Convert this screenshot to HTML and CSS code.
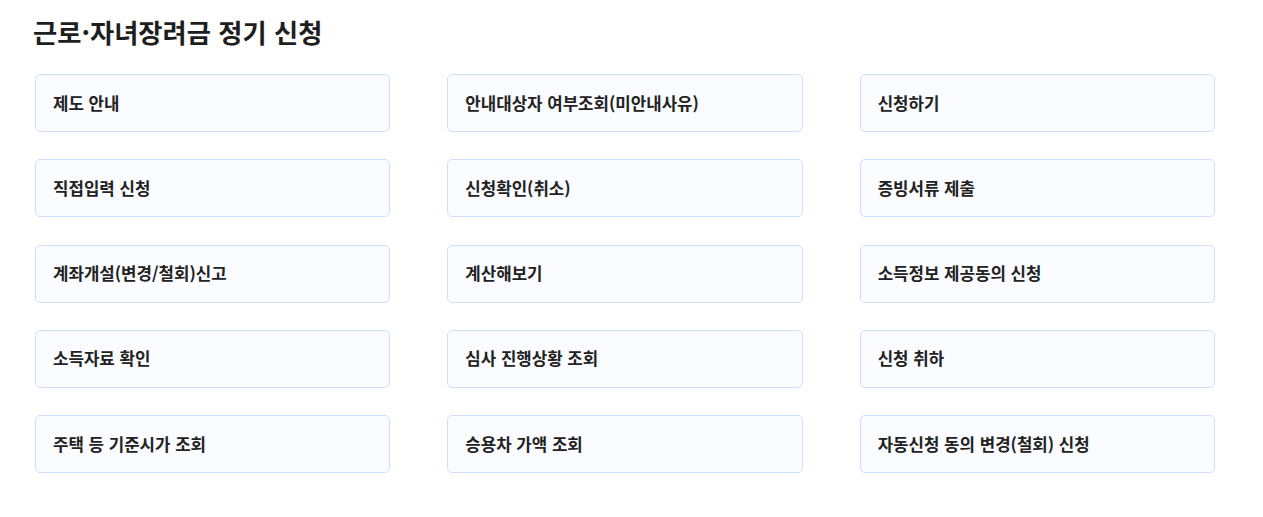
FILE: index.html
```html
<!DOCTYPE html>
<html lang="ko">
<head>
<meta charset="utf-8">
<title>근로·자녀장려금 정기 신청</title>
<link rel="stylesheet" href="styles.css">
</head>
<body>
<main class="page">
  <h1 class="title">근로·자녀장려금 정기 신청</h1>
  <ul class="menu">
    <li class="menu-item"><a href="#">제도 안내</a></li>
    <li class="menu-item"><a href="#">안내대상자 여부조회(미안내사유)</a></li>
    <li class="menu-item"><a href="#">신청하기</a></li>
    <li class="menu-item"><a href="#">직접입력 신청</a></li>
    <li class="menu-item"><a href="#">신청확인(취소)</a></li>
    <li class="menu-item"><a href="#">증빙서류 제출</a></li>
    <li class="menu-item"><a href="#">계좌개설(변경/철회)신고</a></li>
    <li class="menu-item"><a href="#">계산해보기</a></li>
    <li class="menu-item"><a href="#">소득정보 제공동의 신청</a></li>
    <li class="menu-item"><a href="#">소득자료 확인</a></li>
    <li class="menu-item"><a href="#">심사 진행상황 조회</a></li>
    <li class="menu-item"><a href="#">신청 취하</a></li>
    <li class="menu-item"><a href="#">주택 등 기준시가 조회</a></li>
    <li class="menu-item"><a href="#">승용차 가액 조회</a></li>
    <li class="menu-item"><a href="#">자동신청 동의 변경(철회) 신청</a></li>
  </ul>
</main>
</body>
</html>
```

FILE: styles.css
```css
* { box-sizing: border-box; }
html, body {
  margin: 0;
  padding: 0;
  background: #ffffff;
}
body {
  font-family: "Noto Sans CJK KR", "Noto Sans", sans-serif;
  color: #222222;
}
.page {
  width: 1180px;
  margin-left: 35px;
  padding-top: 14px;
}
.title {
  margin: 0 0 0 -2px;
  font-size: 26.3px;
  line-height: 36px;
  font-weight: 700;
  color: #1e1e1e;
}
.menu {
  list-style: none;
  margin: 24px 0 0 0;
  padding: 0;
  display: grid;
  grid-template-columns: repeat(3, 1fr);
  column-gap: 57px;
  row-gap: 27.33px;
}
.menu-item a {
  display: flex;
  align-items: center;
  height: 58px;
  padding: 0 17px 1px;
  border: 1px solid #cfdffa;
  border-radius: 5px;
  background: #fafcff;
  color: #222222;
  font-size: 16.8px;
  font-weight: 700;
  text-decoration: none;
}
```
